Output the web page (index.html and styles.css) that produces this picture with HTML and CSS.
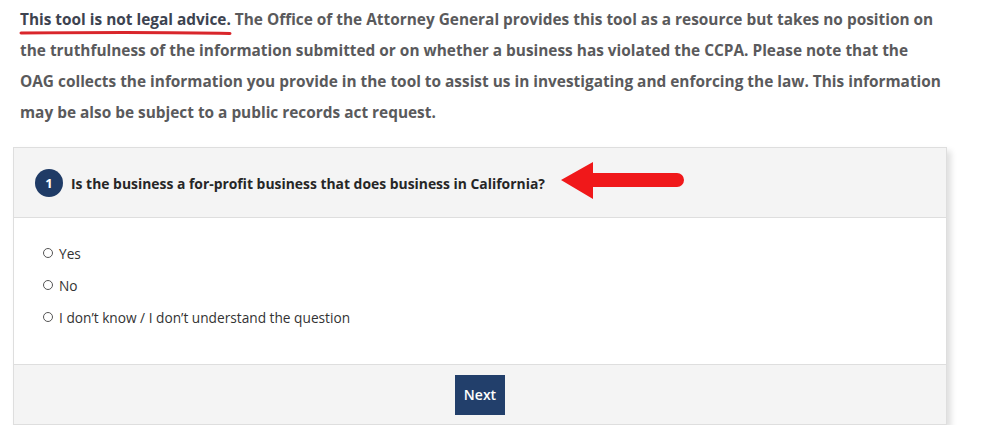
FILE: index.html
```html
<!DOCTYPE html>
<html>
<head>
<meta charset="utf-8">
<link rel="stylesheet" href="styles.css">
</head>
<body>
<div class="page">
  <div class="notice-wrap">
    <p class="notice"><span class="lead">This tool is not legal advice.</span> The Office of the Attorney General provides this tool as a resource but takes no position on the truthfulness of the information submitted or on whether a business has violated the CCPA. Please note that the OAG collects the information you provide in the tool to assist us in investigating and enforcing the law. This information may be also be subject to a public records act request.</p>
    <svg class="scribble" width="214" height="8" viewBox="0 0 214 8"><path d="M2 4 C60 3.5 150 3 211 4.5" stroke="#d9262b" stroke-width="3" fill="none" stroke-linecap="round"/></svg>
  </div>

  <div class="card">
    <div class="card-head">
      <span class="num">1</span>
      <span class="question">Is the business a for-profit business that does business in California?</span>
      <svg class="arrow" width="124" height="40" viewBox="0 0 124 40"><path d="M0 18 L32 0 L32 11 L116 11 A7 7 0 0 1 116 25 L32 25 L32 37 Z" fill="#f0181a"/></svg>
    </div>
    <div class="card-body">
      <label class="opt"><span class="radio"></span>Yes</label>
      <label class="opt"><span class="radio"></span>No</label>
      <label class="opt"><span class="radio"></span>I don’t know / I don’t understand the question</label>
    </div>
    <div class="card-foot">
      <button class="next">Next</button>
    </div>
  </div>
</div>
</body>
</html>
```

FILE: styles.css
```css
html, body {
  margin: 0;
  padding: 0;
  background: #fff;
}
.page {
  font-family: "Open Sans", "Liberation Sans", sans-serif;
}
.notice-wrap {
  position: relative;
}
.notice {
  margin: 0;
  padding: 4px 0 0 20px;
  width: 921px;
  font-size: 15.4px;
  font-weight: 700;
  line-height: 31px;
  color: #5a5a5c;
}
.lead {
  color: #3d4350;
}
.scribble {
  position: absolute;
  left: 19px;
  top: 29px;
}
.card {
  margin: 19px 0 0 13px;
  width: 932px;
  border: 1px solid #dedede;
  box-shadow: 4px 4px 6px rgba(0,0,0,0.13);
  background: #fff;
}
.card-head {
  position: relative;
  height: 70px;
  background: #f4f4f4;
  border-bottom: 1px solid #dedede;
  display: flex;
  align-items: center;
  padding-left: 21px;
  padding-top: 1px;
  box-sizing: border-box;
}
.num {
  width: 28px;
  height: 28px;
  border-radius: 50%;
  background: #1f3b66;
  color: #fff;
  font-size: 13px;
  font-weight: 700;
  display: flex;
  align-items: center;
  justify-content: center;
  margin-right: 8px;
}
.question {
  font-size: 13.9px;
  font-weight: 700;
  color: #262626;
}
.arrow {
  position: absolute;
  left: 547px;
  top: 14px;
}
.card-body {
  height: 146px;
  padding: 25px 0 0 28px;
  box-sizing: border-box;
  display: flex;
  flex-direction: column;
  gap: 12px;
}
.opt {
  display: flex;
  align-items: center;
  font-size: 13.7px;
  color: #333;
  height: 20px;
}
.radio {
  width: 8px;
  height: 8px;
  border: 1px solid #555;
  border-radius: 50%;
  margin-right: 6px;
  margin-left: 1px;
}
.card-foot {
  height: 59px;
  background: #f4f4f4;
  border-top: 1px solid #dedede;
  display: flex;
  justify-content: center;
  align-items: center;
}
.next {
  width: 50px;
  height: 40px;
  border: none;
  background: #223f6b;
  color: #fff;
  font-family: "Open Sans", "Liberation Sans", sans-serif;
  font-size: 14px;
  font-weight: 600;
  padding: 0;
}
```
